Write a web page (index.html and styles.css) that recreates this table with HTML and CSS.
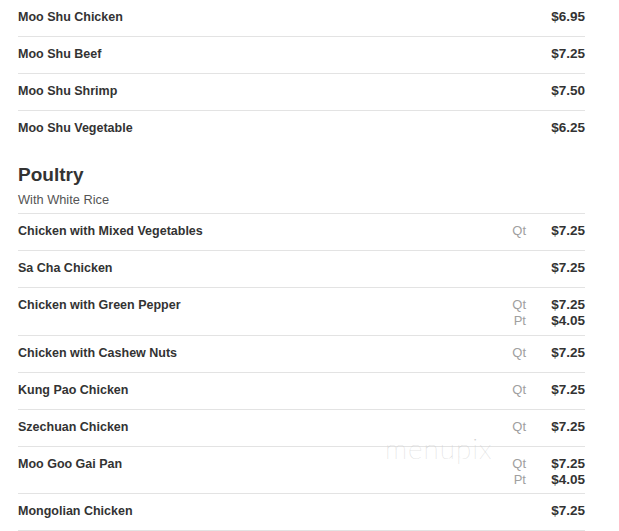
FILE: index.html
```html
<!DOCTYPE html>
<html>
<head>
<meta charset="utf-8">
<link rel="stylesheet" href="styles.css">
</head>
<body>
<div class="menu">
  <section class="section first">
    <div class="item"><div class="name">Moo Shu Chicken</div><div class="prices"><div class="pr"><span class="size"></span><span class="amt">$6.95</span></div></div></div>
    <div class="item"><div class="name">Moo Shu Beef</div><div class="prices"><div class="pr"><span class="size"></span><span class="amt">$7.25</span></div></div></div>
    <div class="item"><div class="name">Moo Shu Shrimp</div><div class="prices"><div class="pr"><span class="size"></span><span class="amt">$7.50</span></div></div></div>
    <div class="item"><div class="name">Moo Shu Vegetable</div><div class="prices"><div class="pr"><span class="size"></span><span class="amt">$6.25</span></div></div></div>
  </section>
  <section class="section">
    <h2 class="title">Poultry</h2>
    <div class="sub">With White Rice</div>
    <div class="item"><div class="name">Chicken with Mixed Vegetables</div><div class="prices"><div class="pr"><span class="size">Qt</span><span class="amt">$7.25</span></div></div></div>
    <div class="item"><div class="name">Sa Cha Chicken</div><div class="prices"><div class="pr"><span class="size"></span><span class="amt">$7.25</span></div></div></div>
    <div class="item"><div class="name">Chicken with Green Pepper</div><div class="prices"><div class="pr"><span class="size">Qt</span><span class="amt">$7.25</span></div><div class="pr"><span class="size">Pt</span><span class="amt">$4.05</span></div></div></div>
    <div class="item"><div class="name">Chicken with Cashew Nuts</div><div class="prices"><div class="pr"><span class="size">Qt</span><span class="amt">$7.25</span></div></div></div>
    <div class="item"><div class="name">Kung Pao Chicken</div><div class="prices"><div class="pr"><span class="size">Qt</span><span class="amt">$7.25</span></div></div></div>
    <div class="item"><div class="name">Szechuan Chicken</div><div class="prices"><div class="pr"><span class="size">Qt</span><span class="amt">$7.25</span></div></div></div>
    <div class="item double-tight"><div class="name">Moo Goo Gai Pan</div><div class="prices"><div class="pr"><span class="size">Qt</span><span class="amt">$7.25</span></div><div class="pr"><span class="size">Pt</span><span class="amt">$4.05</span></div></div></div>
    <div class="item"><div class="name">Mongolian Chicken</div><div class="prices"><div class="pr"><span class="size"></span><span class="amt">$7.25</span></div></div></div>
    <div class="item"><div class="name">&nbsp;</div><div class="prices"></div></div>
  </section>
  <div class="watermark">menupix</div>
</div>
</body>
</html>
```
FILE: styles.css
```css
html, body {
  margin: 0;
  padding: 0;
  background: #fff;
  overflow: hidden;
}
body {
  font-family: "Liberation Sans", Arial, sans-serif;
  color: #333;
}
.menu {
  position: relative;
  margin: -1px 0 0 18px;
  width: 567px;
}
.section + .section {
  margin-top: 17px;
}
.title {
  margin: 0;
  font-size: 19px;
  line-height: 22px;
  font-weight: bold;
  color: #333;
}
.sub {
  margin-top: 6px;
  padding-bottom: 5px;
  font-size: 12.8px;
  line-height: 16px;
  color: #555;
}
.item {
  display: flex;
  justify-content: space-between;
  align-items: flex-start;
  border-top: 1px solid #e3e3e3;
  padding: 9px 0 6px;
}
.item.double-tight {
  padding-bottom: 5px;
}
.name {
  font-size: 12.5px;
  font-weight: bold;
  line-height: 16px;
  margin-bottom: 5px;
  color: #333;
}
.prices {
  display: flex;
  flex-direction: column;
}
.pr {
  display: flex;
  justify-content: flex-end;
  line-height: 16px;
}
.size {
  font-size: 13px;
  color: #a0a0a0;
}
.amt {
  width: 59px;
  text-align: right;
  font-size: 13.5px;
  font-weight: bold;
  color: #333;
}
.watermark {
  position: absolute;
  left: 367px;
  top: 432px;
  font-family: Lato, "Noto Sans", sans-serif;
  font-weight: 100;
  font-size: 28px;
  letter-spacing: 1px;
  color: #cccccc;
}
```
